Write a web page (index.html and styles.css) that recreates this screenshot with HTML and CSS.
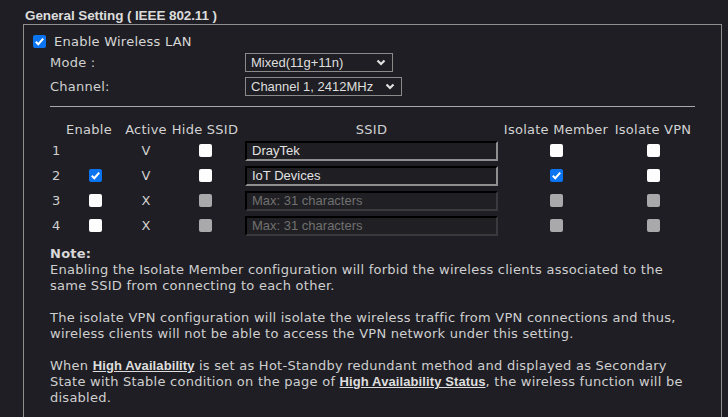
FILE: index.html
```html
<!doctype html>
<html>
<head>
<meta charset="utf-8">
<title>General Setting</title>
<link rel="stylesheet" href="styles.css">
</head>
<body>
<div class="page">
	<div class="title">General Setting ( IEEE 802.11 )</div>
	<div class="box">
		<label class="enable-row">
			<input type="checkbox" class="chk" checked>
			<span>Enable Wireless LAN</span>
		</label>
		<div class="field">
			<span class="field-label">Mode :</span>
			<select class="sel sel-mode">
				<option>Mixed(11g+11n)</option>
			</select>
		</div>
		<div class="field">
			<span class="field-label">Channel:</span>
			<select class="sel sel-channel">
				<option>Channel 1, 2412MHz</option>
			</select>
		</div>
		<div class="rule"></div>

		<div class="ssid-grid">
			<div class="hd"></div>
			<div class="hd hd-enable">Enable</div>
			<div class="hd">Active</div>
			<div class="hd">Hide SSID</div>
			<div class="hd">SSID</div>
			<div class="hd">Isolate Member</div>
			<div class="hd">Isolate VPN</div>

			<div class="num">1</div>
			<div class="cell"></div>
			<div class="cell">V</div>
			<div class="cell"><input type="checkbox" class="chk"></div>
			<div class="cell"><input type="text" class="ssid" value="DrayTek"></div>
			<div class="cell"><input type="checkbox" class="chk"></div>
			<div class="cell"><input type="checkbox" class="chk"></div>

			<div class="num">2</div>
			<div class="cell cell-enable"><input type="checkbox" class="chk" checked></div>
			<div class="cell">V</div>
			<div class="cell"><input type="checkbox" class="chk"></div>
			<div class="cell"><input type="text" class="ssid" value="IoT Devices"></div>
			<div class="cell"><input type="checkbox" class="chk" checked></div>
			<div class="cell"><input type="checkbox" class="chk"></div>

			<div class="num">3</div>
			<div class="cell cell-enable"><input type="checkbox" class="chk"></div>
			<div class="cell">X</div>
			<div class="cell"><input type="checkbox" class="chk" disabled></div>
			<div class="cell"><input type="text" class="ssid" placeholder="Max: 31 characters" disabled></div>
			<div class="cell"><input type="checkbox" class="chk" disabled></div>
			<div class="cell"><input type="checkbox" class="chk" disabled></div>

			<div class="num">4</div>
			<div class="cell cell-enable"><input type="checkbox" class="chk"></div>
			<div class="cell">X</div>
			<div class="cell"><input type="checkbox" class="chk" disabled></div>
			<div class="cell"><input type="text" class="ssid" placeholder="Max: 31 characters" disabled></div>
			<div class="cell"><input type="checkbox" class="chk" disabled></div>
			<div class="cell"><input type="checkbox" class="chk" disabled></div>
		</div>

		<div class="note">
			<b>Note:</b><br>
			Enabling the Isolate Member configuration will forbid the wireless clients associated to the same SSID from connecting to each other.<br>
			<br>
			The isolate VPN configuration will isolate the wireless traffic from VPN connections and thus, wireless clients will not be able to access the VPN network under this setting.<br>
			<br>
			When <a href="#" class="lnk">High Availability</a> is set as Hot-Standby redundant method and displayed as Secondary State with Stable condition on the page of <a href="#" class="lnk">High Availability Status</a>, the wireless function will be disabled.
		</div>
	</div>
</div>
</body>
</html>
```

FILE: styles.css
```css
*{
	margin: 0;
	padding: 0;
	box-sizing: border-box;
}
body{
	background-color: #1e1e24;
	color: #d0d0d0;
	font-family: "DejaVu Sans", Verdana, sans-serif;
	font-size: 13px;
	letter-spacing: 0.25px;
	overflow: hidden;
}
.page{
	padding: 7px 6px 0 23px;
}
.title{
	padding-left: 2px;
	font-family: "Liberation Sans", Arial, sans-serif;
	font-weight: bold;
	font-size: 13.5px;
	letter-spacing: -0.1px;
	line-height: 17px;
	color: #dcdcdc;
}
.box{
	border: 1px solid #8e8e8e;
	padding: 8px 20px 40px 9px;
}
.enable-row{
	display: flex;
	align-items: center;
	height: 16px;
	gap: 8px;
	color: #d6d6d6;
}
.field{
	display: flex;
	align-items: center;
	height: 24px;
	padding-left: 17px;
}
.enable-row + .field{
	margin-top: 1px;
}
.field-label{
	width: 195px;
}
.sel{
	appearance: none;
	height: 19px;
	background-color: #1e1e24;
	background-image: url("data:image/svg+xml,%3Csvg xmlns='http://www.w3.org/2000/svg' width='10' height='7' viewBox='0 0 10 7'%3E%3Cpath d='M1.5 1.5 L5 5 L8.5 1.5' fill='none' stroke='%23e0e0e0' stroke-width='2.2'/%3E%3C/svg%3E");
	background-repeat: no-repeat;
	background-position: right 6px center;
	border: 1px solid #8a8a8a;
	color: #dedede;
	font-family: "Liberation Sans", Arial, sans-serif;
	font-size: 13px;
	letter-spacing: 0;
	padding: 0 0 0 5px;
	border-radius: 0;
}
.sel-mode{
	width: 148px;
}
.sel-channel{
	width: 157px;
}
.rule{
	margin: 8px 0 0 17px;
	height: 1px;
	width: 645px;
	background-color: #a9a9a9;
}
.ssid-grid{
	display: grid;
	grid-template-columns: 20px 50px 52px 66px 267px 102px 92px;
	grid-template-rows: 20px repeat(4, 25px);
	margin: 11px 0 0 17px;
	align-items: center;
	justify-items: center;
}
.hd{
	align-self: start;
	white-space: nowrap;
	line-height: 23px;
	color: #d2d2d2;
}
.hd-enable{
	padding-right: 12px;
}
.num{
	justify-self: start;
	padding-left: 2px;
}
.cell{
	display: flex;
	align-items: center;
	justify-content: center;
}
.chk{
	appearance: none;
	width: 13px;
	height: 13px;
	background-color: #fdfdfd;
	border-radius: 2px;
	display: block;
}
.chk:checked{
	background-color: #0b74f0;
	background-image: url("data:image/svg+xml,%3Csvg xmlns='http://www.w3.org/2000/svg' width='13' height='13' viewBox='0 0 13 13'%3E%3Cpath d='M2.8 6.8 L5.3 9.2 L10.2 3.6' fill='none' stroke='%23ffffff' stroke-width='2'/%3E%3C/svg%3E");
}
.chk:disabled{
	background-color: #a9a9ab;
}
.ssid{
	width: 253px;
	height: 20px;
	background-color: #1f1f23;
	border: 2px inset #8f8f8f;
	border-top-color: #262626;
	border-left-color: #262626;
	color: #e2e2e2;
	font-family: "Liberation Sans", Arial, sans-serif;
	font-size: 13px;
	letter-spacing: 0;
	padding: 0 0 0 5px;
	outline: none;
}
.ssid:disabled{
	border-right-color: #3a3a3e;
	border-bottom-color: #3a3a3e;
	background-color: #202024;
}
.ssid::placeholder{
	color: #707070;
}
.note{
	margin: 8px 0 0 17px;
	line-height: 16px;
	width: 650px;
	color: #cfcfcf;
}
.note b{
	color: #d8d8d8;
}
.lnk{
	font-family: "Liberation Sans", Arial, sans-serif;
	font-weight: bold;
	letter-spacing: 0.1px;
	color: #dedede;
}
```
